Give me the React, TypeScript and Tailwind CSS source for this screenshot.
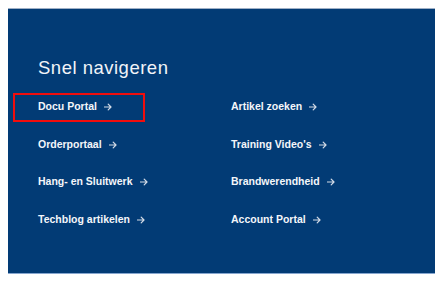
const links: [string, string][] = [
  ["Docu Portal", "Artikel zoeken"],
  ["Orderportaal", "Training Video's"],
  ["Hang- en Sluitwerk", "Brandwerendheid"],
  ["Techblog artikelen", "Account Portal"],
];

function Arrow() {
  return (
    <svg width="8" height="8" viewBox="0 0 8 8" fill="none" className="shrink-0">
      <path d="M0.5 4H7M4.2 1.2L7 4L4.2 6.8" stroke="#d3dbe6" strokeWidth="1.2" strokeLinecap="round" strokeLinejoin="round" />
    </svg>
  );
}

function NavLink({ label, marked }: { label: string; marked?: boolean }) {
  return (
    <a href="#" className="relative flex h-5 items-center gap-[7px] text-[10.5px] font-bold text-[#f4f6fa]">
      {label}
      <Arrow />
      {marked && (
        <span className="pointer-events-none absolute left-[-25px] top-[-4px] h-[29px] w-[132px] border-2 border-[#f20d0d]" />
      )}
    </a>
  );
}

export default function App() {
  return (
    <div className="h-[285px] w-[444px] bg-white pl-2 pt-2" style={{ fontFamily: '"Liberation Sans", Arial, sans-serif' }}>
      <div className="h-[266px] w-[427px] border-t border-b border-t-[#9fb0c6] border-b-[#86a6cf] bg-[#023b75] pl-[30px] pt-[47px]">
        <h2 className="text-[18.5px] leading-6 tracking-[0.5px] text-[#f1f4f8]">Snel navigeren</h2>
        <div className="mt-[17px] grid grid-cols-[193px_1fr] gap-y-[17.5px]">
          {links.map(([left, right], i) => (
            <div key={left} className="contents">
              <NavLink label={left} marked={i === 0} />
              <NavLink label={right} />
            </div>
          ))}
        </div>
      </div>
    </div>
  );
}
